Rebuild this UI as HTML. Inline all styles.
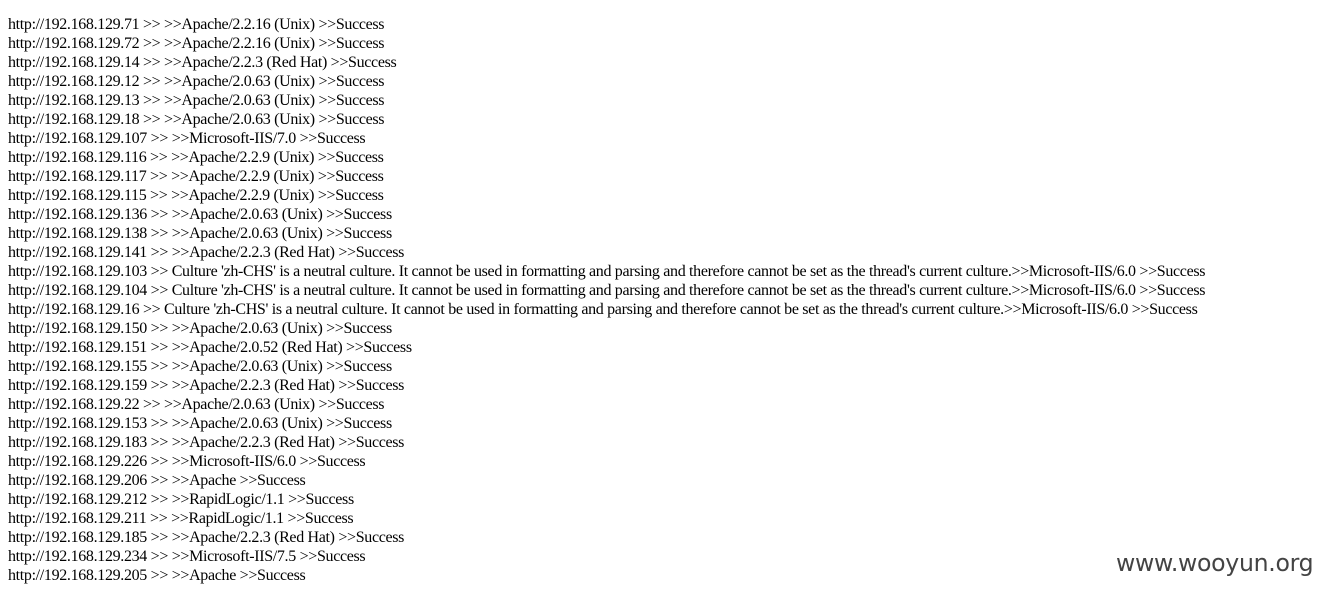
<!DOCTYPE html>
<html><head><meta charset="utf-8"><style>
body{margin:0;background:#fff;width:1322px;height:592px;overflow:hidden;position:relative}
.t{position:absolute;left:8px;top:15px;font-family:"Liberation Serif",serif;font-size:16px;line-height:19px;color:#000;white-space:pre;letter-spacing:-0.33px}
.w{position:absolute;left:1116px;top:549px;font-family:"DejaVu Sans","Liberation Sans",sans-serif;font-size:23.6px;color:#444;letter-spacing:-0.3px}
</style></head><body>
<div class="t">http://192.168.129.71 &gt;&gt; &gt;&gt;Apache/2.2.16 (Unix) &gt;&gt;Success
http://192.168.129.72 &gt;&gt; &gt;&gt;Apache/2.2.16 (Unix) &gt;&gt;Success
http://192.168.129.14 &gt;&gt; &gt;&gt;Apache/2.2.3 (Red Hat) &gt;&gt;Success
http://192.168.129.12 &gt;&gt; &gt;&gt;Apache/2.0.63 (Unix) &gt;&gt;Success
http://192.168.129.13 &gt;&gt; &gt;&gt;Apache/2.0.63 (Unix) &gt;&gt;Success
http://192.168.129.18 &gt;&gt; &gt;&gt;Apache/2.0.63 (Unix) &gt;&gt;Success
http://192.168.129.107 &gt;&gt; &gt;&gt;Microsoft-IIS/7.0 &gt;&gt;Success
http://192.168.129.116 &gt;&gt; &gt;&gt;Apache/2.2.9 (Unix) &gt;&gt;Success
http://192.168.129.117 &gt;&gt; &gt;&gt;Apache/2.2.9 (Unix) &gt;&gt;Success
http://192.168.129.115 &gt;&gt; &gt;&gt;Apache/2.2.9 (Unix) &gt;&gt;Success
http://192.168.129.136 &gt;&gt; &gt;&gt;Apache/2.0.63 (Unix) &gt;&gt;Success
http://192.168.129.138 &gt;&gt; &gt;&gt;Apache/2.0.63 (Unix) &gt;&gt;Success
http://192.168.129.141 &gt;&gt; &gt;&gt;Apache/2.2.3 (Red Hat) &gt;&gt;Success
http://192.168.129.103 &gt;&gt; Culture 'zh-CHS' is a neutral culture. It cannot be used in formatting and parsing and therefore cannot be set as the thread's current culture.&gt;&gt;Microsoft-IIS/6.0 &gt;&gt;Success
http://192.168.129.104 &gt;&gt; Culture 'zh-CHS' is a neutral culture. It cannot be used in formatting and parsing and therefore cannot be set as the thread's current culture.&gt;&gt;Microsoft-IIS/6.0 &gt;&gt;Success
http://192.168.129.16 &gt;&gt; Culture 'zh-CHS' is a neutral culture. It cannot be used in formatting and parsing and therefore cannot be set as the thread's current culture.&gt;&gt;Microsoft-IIS/6.0 &gt;&gt;Success
http://192.168.129.150 &gt;&gt; &gt;&gt;Apache/2.0.63 (Unix) &gt;&gt;Success
http://192.168.129.151 &gt;&gt; &gt;&gt;Apache/2.0.52 (Red Hat) &gt;&gt;Success
http://192.168.129.155 &gt;&gt; &gt;&gt;Apache/2.0.63 (Unix) &gt;&gt;Success
http://192.168.129.159 &gt;&gt; &gt;&gt;Apache/2.2.3 (Red Hat) &gt;&gt;Success
http://192.168.129.22 &gt;&gt; &gt;&gt;Apache/2.0.63 (Unix) &gt;&gt;Success
http://192.168.129.153 &gt;&gt; &gt;&gt;Apache/2.0.63 (Unix) &gt;&gt;Success
http://192.168.129.183 &gt;&gt; &gt;&gt;Apache/2.2.3 (Red Hat) &gt;&gt;Success
http://192.168.129.226 &gt;&gt; &gt;&gt;Microsoft-IIS/6.0 &gt;&gt;Success
http://192.168.129.206 &gt;&gt; &gt;&gt;Apache &gt;&gt;Success
http://192.168.129.212 &gt;&gt; &gt;&gt;RapidLogic/1.1 &gt;&gt;Success
http://192.168.129.211 &gt;&gt; &gt;&gt;RapidLogic/1.1 &gt;&gt;Success
http://192.168.129.185 &gt;&gt; &gt;&gt;Apache/2.2.3 (Red Hat) &gt;&gt;Success
http://192.168.129.234 &gt;&gt; &gt;&gt;Microsoft-IIS/7.5 &gt;&gt;Success
http://192.168.129.205 &gt;&gt; &gt;&gt;Apache &gt;&gt;Success</div>
<div class="w">www.wooyun.org</div>
</body></html>
